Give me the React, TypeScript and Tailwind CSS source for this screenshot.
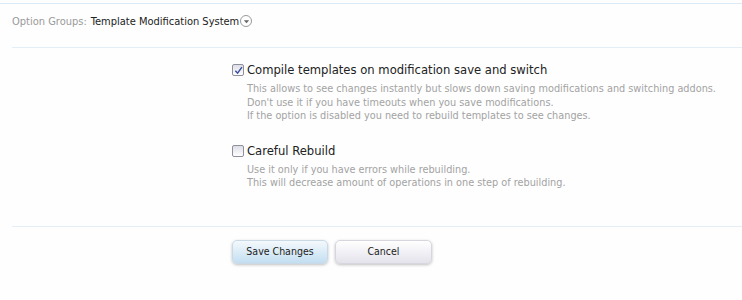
import { useState } from "react"

const font = { fontFamily: '"DejaVu Sans Condensed", "DejaVu Sans", sans-serif' }

function Option({
  label,
  checked,
  lines,
}: {
  label: string
  checked: boolean
  lines: string[]
}) {
  const [on, setOn] = useState(checked)
  return (
    <div className="flex items-start">
      <button
        type="button"
        onClick={() => setOn(!on)}
        className="mt-[1px] mr-[3px] flex h-[12px] w-[12px] shrink-0 items-center justify-center rounded-[2px] border border-[#8f8f9d] bg-gradient-to-b from-[#dedee6] to-[#ffffff]"
      >
        {on && (
          <svg viewBox="0 0 10 10" className="h-[9px] w-[9px]">
            <path d="M1.5 5.2 L4 8 L8.8 1.2" fill="none" stroke="#3a4fa0" strokeWidth="1.6" />
          </svg>
        )}
      </button>
      <div>
        <div className="text-[12.9px] leading-[14px] text-[#222]">{label}</div>
        <div className="mt-[5px] text-[10.8px] leading-[13.5px] text-[#a3a3a3]">
          {lines.map((l) => (
            <div key={l}>{l}</div>
          ))}
        </div>
      </div>
    </div>
  )
}

export default function App() {
  return (
    <div className="h-[300px] w-[742px] overflow-hidden bg-[#fefefe]" style={font}>
      <div className="mt-[3px] h-px bg-[#dbeaf5]" />

      {/* Header */}
      <div className="flex h-[43px] items-start pl-[12px] pt-[10px] text-[11px]">
        <span className="text-[#9a9a9a]">Option Groups:</span>
        <span className="ml-[4px] text-[#222]">Template Modification System</span>
        <span className="ml-[1px] mt-[1px] flex h-[12px] w-[12px] items-center justify-center rounded-full border border-[#9a9a9a] bg-white">
          <svg viewBox="0 0 8 8" className="h-[7px] w-[7px]">
            <path d="M1 2.5 L7 2.5 L4 6 Z" fill="#666" />
          </svg>
        </span>
      </div>
      <div className="ml-[12px] h-px bg-[#e3eef6]" />

      {/* Options */}
      <div className="flex flex-col gap-[21px] pl-[232px] pt-[15px]">
        <Option
          label="Compile templates on modification save and switch"
          checked
          lines={[
            "This allows to see changes instantly but slows down saving modifications and switching addons.",
            "Don't use it if you have timeouts when you save modifications.",
            "If the option is disabled you need to rebuild templates to see changes.",
          ]}
        />
        <Option
          label="Careful Rebuild"
          checked={false}
          lines={[
            "Use it only if you have errors while rebuilding.",
            "This will decrease amount of operations in one step of rebuilding.",
          ]}
        />
      </div>

      <div className="ml-[12px] mt-[36px] h-px bg-[#e3eef6]" />

      {/* Buttons */}
      <div className="flex gap-[7px] pl-[232px] pt-[13px]">
        <button
          type="button"
          className="h-[24px] w-[96px] rounded-[5px] border border-[#c9d9e6] bg-gradient-to-b from-[#f4f9fc] to-[#c3def1] text-[10.5px] text-[#222] shadow-[0_1px_3px_rgba(0,0,0,0.25)]"
        >
          Save Changes
        </button>
        <button
          type="button"
          className="h-[24px] w-[97px] rounded-[5px] border border-[#d6d6de] bg-gradient-to-b from-[#ffffff] to-[#e4e3ec] text-[10.5px] text-[#222] shadow-[0_1px_3px_rgba(0,0,0,0.25)]"
        >
          Cancel
        </button>
      </div>
    </div>
  )
}
